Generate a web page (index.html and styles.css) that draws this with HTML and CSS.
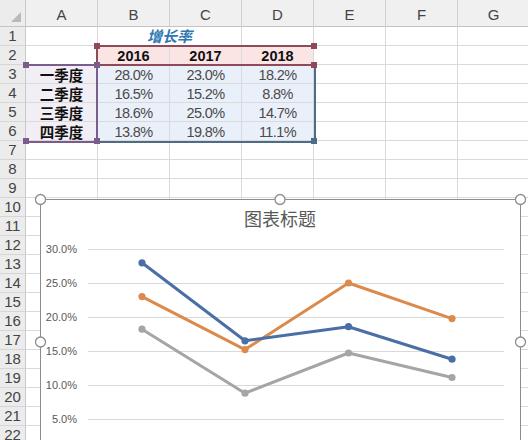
FILE: index.html
```html
<!DOCTYPE html>
<html>
<head>
<meta charset="utf-8">
<link rel="stylesheet" href="styles.css">
</head>
<body>
<div class="sheet">
  <div class="row hdr">
    <div class="rh corner"><svg class="tri" width="12" height="12" viewBox="0 0 12 12"><polygon points="11,1 11,11 1,11" fill="#b9b9b9"/></svg></div>
    <div class="c">A</div><div class="c">B</div><div class="c">C</div><div class="c">D</div><div class="c">E</div><div class="c">F</div><div class="c">G</div>
  </div>
  <div class="row"><div class="rh">1</div><div class="c"></div><div class="c c2 title">增长率</div><div class="c"></div><div class="c"></div><div class="c"></div><div class="c"></div></div>
  <div class="row"><div class="rh">2</div><div class="c"></div><div class="c yr">2016</div><div class="c yr">2017</div><div class="c yr">2018</div><div class="c"></div><div class="c"></div><div class="c"></div></div>
  <div class="row"><div class="rh">3</div><div class="c q">一季度</div><div class="c v">28.0%</div><div class="c v">23.0%</div><div class="c v">18.2%</div><div class="c"></div><div class="c"></div><div class="c"></div></div>
  <div class="row"><div class="rh">4</div><div class="c q">二季度</div><div class="c v">16.5%</div><div class="c v">15.2%</div><div class="c v">8.8%</div><div class="c"></div><div class="c"></div><div class="c"></div></div>
  <div class="row"><div class="rh">5</div><div class="c q">三季度</div><div class="c v">18.6%</div><div class="c v">25.0%</div><div class="c v">14.7%</div><div class="c"></div><div class="c"></div><div class="c"></div></div>
  <div class="row"><div class="rh">6</div><div class="c q">四季度</div><div class="c v">13.8%</div><div class="c v">19.8%</div><div class="c v">11.1%</div><div class="c"></div><div class="c"></div><div class="c"></div></div>
  <div class="row"><div class="rh">7</div><div class="c"></div><div class="c"></div><div class="c"></div><div class="c"></div><div class="c"></div><div class="c"></div><div class="c"></div></div>
  <div class="row"><div class="rh">8</div><div class="c"></div><div class="c"></div><div class="c"></div><div class="c"></div><div class="c"></div><div class="c"></div><div class="c"></div></div>
  <div class="row"><div class="rh">9</div><div class="c"></div><div class="c"></div><div class="c"></div><div class="c"></div><div class="c"></div><div class="c"></div><div class="c"></div></div>
  <div class="row"><div class="rh">10</div><div class="c"></div><div class="c"></div><div class="c"></div><div class="c"></div><div class="c"></div><div class="c"></div><div class="c"></div></div>
  <div class="row"><div class="rh">11</div><div class="c"></div><div class="c"></div><div class="c"></div><div class="c"></div><div class="c"></div><div class="c"></div><div class="c"></div></div>
  <div class="row"><div class="rh">12</div><div class="c"></div><div class="c"></div><div class="c"></div><div class="c"></div><div class="c"></div><div class="c"></div><div class="c"></div></div>
  <div class="row"><div class="rh">13</div><div class="c"></div><div class="c"></div><div class="c"></div><div class="c"></div><div class="c"></div><div class="c"></div><div class="c"></div></div>
  <div class="row"><div class="rh">14</div><div class="c"></div><div class="c"></div><div class="c"></div><div class="c"></div><div class="c"></div><div class="c"></div><div class="c"></div></div>
  <div class="row"><div class="rh">15</div><div class="c"></div><div class="c"></div><div class="c"></div><div class="c"></div><div class="c"></div><div class="c"></div><div class="c"></div></div>
  <div class="row"><div class="rh">16</div><div class="c"></div><div class="c"></div><div class="c"></div><div class="c"></div><div class="c"></div><div class="c"></div><div class="c"></div></div>
  <div class="row"><div class="rh">17</div><div class="c"></div><div class="c"></div><div class="c"></div><div class="c"></div><div class="c"></div><div class="c"></div><div class="c"></div></div>
  <div class="row"><div class="rh">18</div><div class="c"></div><div class="c"></div><div class="c"></div><div class="c"></div><div class="c"></div><div class="c"></div><div class="c"></div></div>
  <div class="row"><div class="rh">19</div><div class="c"></div><div class="c"></div><div class="c"></div><div class="c"></div><div class="c"></div><div class="c"></div><div class="c"></div></div>
  <div class="row"><div class="rh">20</div><div class="c"></div><div class="c"></div><div class="c"></div><div class="c"></div><div class="c"></div><div class="c"></div><div class="c"></div></div>
  <div class="row"><div class="rh">21</div><div class="c"></div><div class="c"></div><div class="c"></div><div class="c"></div><div class="c"></div><div class="c"></div><div class="c"></div></div>
  <div class="row"><div class="rh">22</div><div class="c"></div><div class="c"></div><div class="c"></div><div class="c"></div><div class="c"></div><div class="c"></div><div class="c"></div></div>

  <div class="rng rng-name"></div>
  <div class="rng rng-cat"></div>
  <div class="rng rng-val"></div>
  <div class="hd hd-name" style="left:94px;top:43px"></div>
  <div class="hd hd-name" style="left:311px;top:43px"></div>
  <div class="hd hd-name" style="left:311px;top:62px"></div>
  <div class="hd hd-cat" style="left:94px;top:62px"></div>
  <div class="hd hd-cat" style="left:23px;top:62px"></div>
  <div class="hd hd-cat" style="left:23px;top:138px"></div>
  <div class="hd hd-cat" style="left:94px;top:138px"></div>
  <div class="hd hd-val" style="left:311px;top:138px"></div>

  <div class="chart">
    <svg class="plot" width="482" height="288" viewBox="40 199 482 288">
      <text x="280" y="226" class="ttl" text-anchor="middle">图表标题</text>
      <g stroke="#d9d9d9" stroke-width="1">
        <line x1="88" y1="249.5" x2="504" y2="249.5"/>
        <line x1="88" y1="283.5" x2="504" y2="283.5"/>
        <line x1="88" y1="317.5" x2="504" y2="317.5"/>
        <line x1="88" y1="351.5" x2="504" y2="351.5"/>
        <line x1="88" y1="385.5" x2="504" y2="385.5"/>
        <line x1="88" y1="419.5" x2="504" y2="419.5"/>
      </g>
      <g class="ax" text-anchor="end">
        <text x="77" y="253">30.0%</text>
        <text x="77" y="287">25.0%</text>
        <text x="77" y="321">20.0%</text>
        <text x="77" y="355">15.0%</text>
        <text x="77" y="389">10.0%</text>
        <text x="77" y="423">5.0%</text>
      </g>
      <g fill="none" stroke-width="3" stroke-linejoin="round" stroke-linecap="round">
        <polyline stroke="#a5a5a5" points="142,329.2 245,393.2 348.5,353 452,377.5"/>
        <polyline stroke="#dc8a4b" points="142,296.6 245,349.6 348.5,283 452,318.6"/>
        <polyline stroke="#4a6ea6" points="142,262.8 245,340.8 348.5,326.7 452,359.2"/>
      </g>
      <g fill="#a5a5a5"><circle cx="142" cy="329.2" r="3.6"/><circle cx="245" cy="393.2" r="3.6"/><circle cx="348.5" cy="353" r="3.6"/><circle cx="452" cy="377.5" r="3.6"/></g>
      <g fill="#dc8a4b"><circle cx="142" cy="296.6" r="3.6"/><circle cx="245" cy="349.6" r="3.6"/><circle cx="348.5" cy="283" r="3.6"/><circle cx="452" cy="318.6" r="3.6"/></g>
      <g fill="#4a6ea6"><circle cx="142" cy="262.8" r="3.6"/><circle cx="245" cy="340.8" r="3.6"/><circle cx="348.5" cy="326.7" r="3.6"/><circle cx="452" cy="359.2" r="3.6"/></g>
      <g fill="#fff" stroke="#8c8c8c" stroke-width="1.3">
        <circle cx="40.5" cy="199.5" r="5"/>
        <circle cx="280" cy="199.5" r="5"/>
        <circle cx="520.5" cy="199.5" r="5"/>
        <circle cx="40.5" cy="342" r="5"/>
        <circle cx="520.5" cy="342" r="5"/>
      </g>
    </svg>
  </div>
</div>
</body>
</html>
```
FILE: styles.css
```css
html, body {
  margin: 0;
  padding: 0;
  background: #fff;
  overflow: hidden;
}
.sheet {
  position: relative;
  width: 528px;
  height: 440px;
  overflow: hidden;
  font-family: "Liberation Sans", "Noto Sans CJK SC", sans-serif;
}
.row {
  display: flex;
  height: 19px;
}
.row.hdr {
  height: 27px;
}
.rh {
  flex: 0 0 26px;
  box-sizing: border-box;
  background: #ececec;
  border-right: 1px solid #c9c9c9;
  border-bottom: 1px solid #d6d6d6;
  color: #444;
  font-size: 15px;
  line-height: 18px;
  text-align: center;
}
.c {
  flex: 0 0 72px;
  box-sizing: border-box;
  border-right: 1px solid #dadada;
  border-bottom: 1px solid #dadada;
  text-align: center;
  font-size: 14px;
  line-height: 18px;
  color: #333;
  white-space: nowrap;
  overflow: visible;
}
.c2 {
  flex-basis: 144px;
}
.hdr .c {
  background: #f0f0f0;
  border-right-color: #d2d2d2;
  border-bottom: 1px solid #c3c3c3;
  color: #444;
  font-size: 15px;
  line-height: 26px;
  padding-top: 2px;
}
.hdr .rh {
  border-bottom: 1px solid #c3c3c3;
  position: relative;
}
.corner .tri {
  position: absolute;
  right: 3px;
  bottom: 3px;
}
.title {
  font-family: "Noto Sans CJK SC", sans-serif;
  font-weight: bold;
  font-style: italic;
  color: #2f77b3;
  font-size: 15px;
  line-height: 18px;
}
.yr {
  background: #fbe4e4;
  font-weight: bold;
  color: #111;
  font-size: 14.5px;
  padding-top: 1px;
}
.q {
  background: #f2eef6;
  font-family: "Noto Sans CJK SC", sans-serif;
  font-weight: bold;
  color: #111;
  font-size: 14.5px;
  line-height: 19px;
}
.v {
  background: #eaf0fa;
  color: #4a4a4a;
  letter-spacing: -0.6px;
  font-size: 14.5px;
  padding-top: 1px;
}
.rng {
  position: absolute;
  box-sizing: border-box;
}
.rng-name {
  left: 96px;
  top: 45px;
  width: 219px;
  height: 21px;
  border: 2px solid #8e4a58;
  border-right: 0;
  border-bottom: 2px solid #8e4a58;
}
.rng-cat {
  left: 25px;
  top: 64px;
  width: 73px;
  height: 79px;
  border-top: 2px solid #7a5d8c;
  border-bottom: 2px solid #7a5d8c;
  border-right: 2px solid #7a5d8c;
}
.rng-val {
  left: 97px;
  top: 65px;
  width: 219px;
  height: 78px;
  border-right: 2px solid #4e6c86;
  border-bottom: 2px solid #4e6c86;
}
.hd {
  position: absolute;
  width: 6px;
  height: 6px;
}
.hd-name { background: #8e4a58; }
.hd-cat { background: #7a5d8c; }
.hd-val { background: #4e6c86; }
.chart {
  position: absolute;
  left: 40px;
  top: 199px;
  width: 481px;
  height: 287px;
  box-sizing: border-box;
  border: 1px solid #8c8c8c;
  background: #fff;
}
.plot {
  position: absolute;
  left: -1px;
  top: -1px;
  overflow: visible;
}
.ttl {
  font-family: "Noto Sans CJK SC", sans-serif;
  font-size: 18px;
  fill: #595959;
}
.ax text {
  font-family: "Liberation Sans", sans-serif;
  font-size: 11px;
  fill: #595959;
}
```
